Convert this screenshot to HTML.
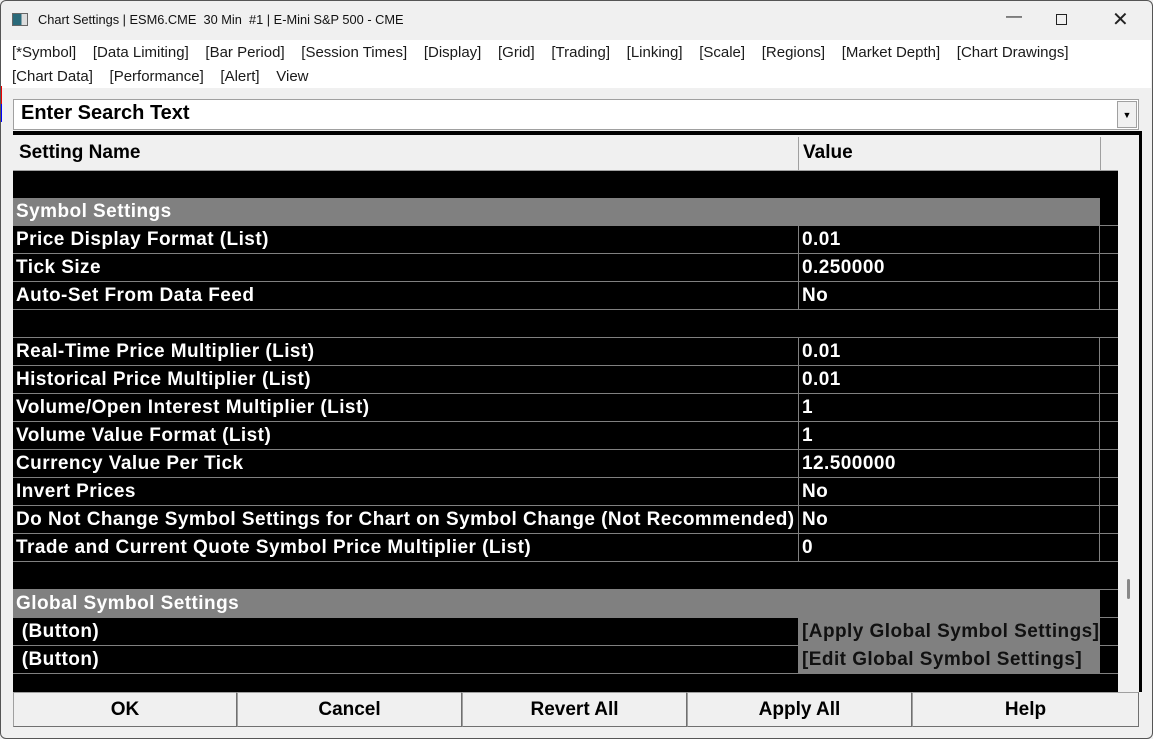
<!DOCTYPE html>
<html><head><style>
*{margin:0;padding:0;box-sizing:border-box}
body{width:1153px;height:739px;background:#f0f0f0;position:relative;overflow:hidden;font-family:"Liberation Sans",Arial,sans-serif}
.frame{position:absolute;left:0;top:0;width:1153px;height:739px;border:1px solid #555;border-radius:6px;pointer-events:none}
.a{position:absolute}
.menu{font-size:15px;color:#1a1a1a;position:absolute;white-space:nowrap;letter-spacing:0}
.r{position:absolute;left:13px;width:1105px;height:28px;background:#000;color:#fff;font-weight:bold;font-size:19px;line-height:28px;border-bottom:1px solid #808080;letter-spacing:0.45px;white-space:nowrap}
.r .n{position:absolute;left:3px;top:0}
.r .v{position:absolute;left:785px;top:0;width:302px;height:27px;border-left:1px solid #808080;border-right:1px solid #808080;padding-left:3px}
.g{background:#808080}
.btn{position:absolute;top:692px;height:35px;background:#f0f0f0;border:1px solid #a0a0a0;border-right-color:#707070;border-bottom-color:#707070;font-weight:bold;font-size:19px;text-align:center;line-height:33px;color:#000}
</style></head><body>
<div class="a" style="left:12px;top:13px;width:16px;height:13px;border:1px solid #666;background:linear-gradient(90deg,#2a6a7a 60%,#ddd 60%)"></div>
<div class="a" style="left:38px;top:12px;font-size:12.8px;color:#111">Chart Settings | ESM6.CME&nbsp; 30 Min&nbsp; #1 | E-Mini S&amp;P 500 - CME</div>
<div class="a" style="left:1006px;top:8px;font-size:16px;color:#222">—</div>
<div class="a" style="left:1056px;top:14px;width:11px;height:11px;border:1px solid #222"></div>
<div class="a" style="left:1112px;top:7px;font-size:20px;color:#222">✕</div>
<div class="a" style="left:1px;top:40px;width:1150px;height:48px;background:#fff"></div>
<div class="menu" style="left:12px;top:44px">[*Symbol]&nbsp;&nbsp;&nbsp; [Data Limiting]&nbsp;&nbsp;&nbsp; [Bar Period]&nbsp;&nbsp;&nbsp; [Session Times]&nbsp;&nbsp;&nbsp; [Display]&nbsp;&nbsp;&nbsp; [Grid]&nbsp;&nbsp;&nbsp; [Trading]&nbsp;&nbsp;&nbsp; [Linking]&nbsp;&nbsp;&nbsp; [Scale]&nbsp;&nbsp;&nbsp; [Regions]&nbsp;&nbsp;&nbsp; [Market Depth]&nbsp;&nbsp;&nbsp; [Chart Drawings]</div>
<div class="menu" style="left:12px;top:68px">[Chart Data]&nbsp;&nbsp;&nbsp; [Performance]&nbsp;&nbsp;&nbsp; [Alert]&nbsp;&nbsp;&nbsp; View</div>
<div class="a" style="left:0;top:86px;width:2px;height:36px;background:linear-gradient(#e00 50%,#00f 50%)"></div>
<div class="a" style="left:13px;top:99px;width:1126px;height:31px;background:#fff;border:1px solid #a0a0a0"></div>
<div class="a" style="left:21px;top:102px;font-size:20px;font-weight:bold">Enter Search Text</div>
<div class="a" style="left:1117px;top:101px;width:20px;height:27px;background:#f0f0f0;border:1px solid #a0a0a0;font-size:9px;text-align:center;line-height:27px">▼</div>
<div class="a" style="left:13px;top:131px;width:1127px;height:4px;background:#000"></div>
<div class="a" style="left:1139px;top:131px;width:3px;height:561px;background:#000"></div>
<div class="a" style="left:13px;top:135px;width:1105px;height:36px;background:#f0f0f0;border-bottom:1px solid #a0a0a0"></div>
<div class="a" style="left:798px;top:137px;width:1px;height:34px;background:#a0a0a0"></div>
<div class="a" style="left:1100px;top:137px;width:1px;height:34px;background:#a0a0a0"></div>
<div class="a" style="left:19px;top:142px;font-size:19px;font-weight:bold">Setting Name</div>
<div class="a" style="left:803px;top:142px;font-size:19px;font-weight:bold">Value</div>
<div class="a" style="left:13px;top:171px;width:1105px;height:521px;background:#000"></div>
<div class="a" style="left:1118px;top:135px;width:21px;height:557px;background:#f0f0f0"></div>
<div class="a" style="left:1127px;top:579px;width:3px;height:20px;background:#888;border-radius:2px"></div>

<div class="r" style="top:198px;background:#000"><div class="g a" style="left:0;top:0;width:1087px;height:27px"></div><span class="n">Symbol Settings</span></div>
<div class="r" style="top:226px"><span class="n">Price Display Format (List)</span><span class="v">0.01</span></div>
<div class="r" style="top:254px"><span class="n">Tick Size</span><span class="v">0.250000</span></div>
<div class="r" style="top:282px"><span class="n">Auto-Set From Data Feed</span><span class="v">No</span></div>
<div class="r" style="top:310px"></div>
<div class="r" style="top:338px"><span class="n">Real-Time Price Multiplier (List)</span><span class="v">0.01</span></div>
<div class="r" style="top:366px"><span class="n">Historical Price Multiplier (List)</span><span class="v">0.01</span></div>
<div class="r" style="top:394px"><span class="n">Volume/Open Interest Multiplier (List)</span><span class="v">1</span></div>
<div class="r" style="top:422px"><span class="n">Volume Value Format (List)</span><span class="v">1</span></div>
<div class="r" style="top:450px"><span class="n">Currency Value Per Tick</span><span class="v">12.500000</span></div>
<div class="r" style="top:478px"><span class="n">Invert Prices</span><span class="v">No</span></div>
<div class="r" style="top:506px"><span class="n">Do Not Change Symbol Settings for Chart on Symbol Change (Not Recommended)</span><span class="v">No</span></div>
<div class="r" style="top:534px"><span class="n">Trade and Current Quote Symbol Price Multiplier (List)</span><span class="v">0</span></div>
<div class="r" style="top:562px"></div>
<div class="r" style="top:590px"><div class="g a" style="left:0;top:0;width:1087px;height:27px"></div><span class="n">Global Symbol Settings</span></div>
<div class="r" style="top:618px"><span class="n">&nbsp;(Button)</span><span class="v g" style="color:#111">[Apply Global Symbol Settings]</span></div>
<div class="r" style="top:646px"><span class="n">&nbsp;(Button)</span><span class="v g" style="color:#111">[Edit Global Symbol Settings]</span></div>

<div class="btn" style="left:13px;width:224px">OK</div>
<div class="btn" style="left:237px;width:225px">Cancel</div>
<div class="btn" style="left:462px;width:225px">Revert All</div>
<div class="btn" style="left:687px;width:225px">Apply All</div>
<div class="btn" style="left:912px;width:227px">Help</div>
<div class="frame"></div>
</body></html>
